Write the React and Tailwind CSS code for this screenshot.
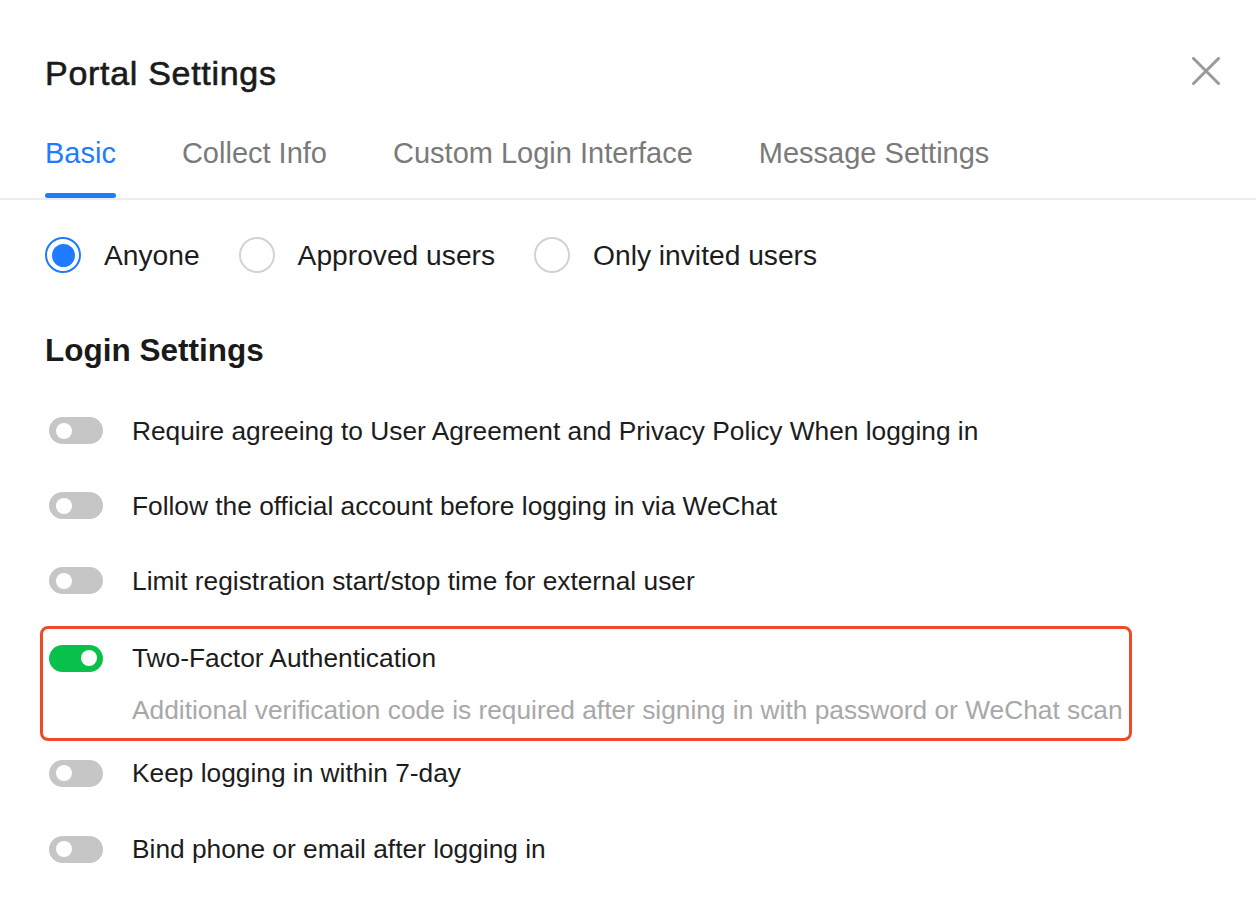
import React from "react";

function Switch({ on }) {
  return (
    <div
      className={`flex items-center w-[54px] h-[27px] rounded-full shrink-0 ${
        on ? "bg-[#09c14a] justify-end pr-[6px]" : "bg-[#c6c6c6] justify-start pl-[7px]"
      }`}
    >
      <div className="w-[16px] h-[16px] rounded-full bg-white" />
    </div>
  );
}

function Radio({ checked, label }) {
  return (
    <div className="flex items-center">
      {checked ? (
        <div className="w-[36px] h-[36px] rounded-full border-2 border-[#1f7bff] flex items-center justify-center">
          <div className="w-[23px] h-[23px] rounded-full bg-[#1f7bff]" />
        </div>
      ) : (
        <div className="w-[36px] h-[36px] rounded-full border-2 border-[#d2d2d2]" />
      )}
      <span className="ml-[23px] text-[28.2px] leading-[36px] text-[#1c1c1c]">{label}</span>
    </div>
  );
}

function Row({ label, className = "" }) {
  return (
    <div className={`flex items-center pl-[4px] ${className}`}>
      <Switch on={false} />
      <span className="ml-[29px] text-[26.3px] leading-[34px] text-[#1c1c1c]">{label}</span>
    </div>
  );
}

export default function App() {
  const tabs = ["Basic", "Collect Info", "Custom Login Interface", "Message Settings"];
  return (
    <div
      className="w-[1256px] h-[900px] bg-white overflow-hidden"
      style={{ fontFamily: '"Liberation Sans", Arial, sans-serif' }}
    >
      <div className="pt-[52px] pl-[45px] pr-[36px] flex items-center justify-between">
        <h1 className="text-[34px] leading-[42px] font-normal tracking-[0.7px] [-webkit-text-stroke:0.6px_#1a1a1a] text-[#1a1a1a]">
          Portal Settings
        </h1>
        <svg width="28" height="28" viewBox="0 0 28 28" className="mt-[-4px]">
          <path d="M1.5 1.5 L26.5 26.5 M26.5 1.5 L1.5 26.5" stroke="#9a9a9a" strokeWidth="3" strokeLinecap="square" />
        </svg>
      </div>

      <div className="mt-[41px] flex gap-[66px] pl-[45px] border-b-2 border-[#ececec]">
        {tabs.map((t, i) => (
          <div key={t} className="flex flex-col">
            <span
              className={`text-[29px] leading-[36px] ${i === 0 ? "text-[#1f7bff]" : "text-[#7a7a7a]"}`}
            >
              {t}
            </span>
            <div
              className={`mt-[22px] h-[5px] rounded-full ${i === 0 ? "bg-[#1f7bff]" : "bg-transparent"}`}
            />
          </div>
        ))}
      </div>

      <div className="pl-[45px] mt-[37px] flex items-center gap-[39px]">
        <Radio checked label="Anyone" />
        <Radio label="Approved users" />
        <Radio label="Only invited users" />
      </div>

      <div className="pl-[45px] mt-[57px] text-[31.5px] leading-[40px] font-bold text-[#1a1a1a]">
        Login Settings
      </div>

      <div className="pl-[45px] mt-[23px] flex flex-col">
        <Row className="h-[75px]" label="Require agreeing to User Agreement and Privacy Policy When logging in" />
        <Row className="h-[75px]" label="Follow the official account before logging in via WeChat" />
        <Row className="h-[75px]" label="Limit registration start/stop time for external user" />

        <div className="mt-[8px] ml-[-5px] w-[1092px] h-[115px] border-[3px] border-[#ef4a27] rounded-[8px] pl-[6px] pt-[14px]">
          <div className="flex items-center h-[30px]">
            <Switch on />
            <span className="ml-[29px] text-[26.3px] leading-[34px] text-[#1c1c1c]">
              Two-Factor Authentication
            </span>
          </div>
          <div className="mt-[20px] pl-[83px] text-[26.3px] leading-[34px] text-[#a8a8a8] whitespace-nowrap">
            Additional verification code is required after signing in with password or WeChat scan
          </div>
        </div>

        <Row className="h-[64px]" label="Keep logging in within 7-day" />
        <Row className="mt-[12px] h-[64px]" label="Bind phone or email after logging in" />
      </div>
    </div>
  );
}
